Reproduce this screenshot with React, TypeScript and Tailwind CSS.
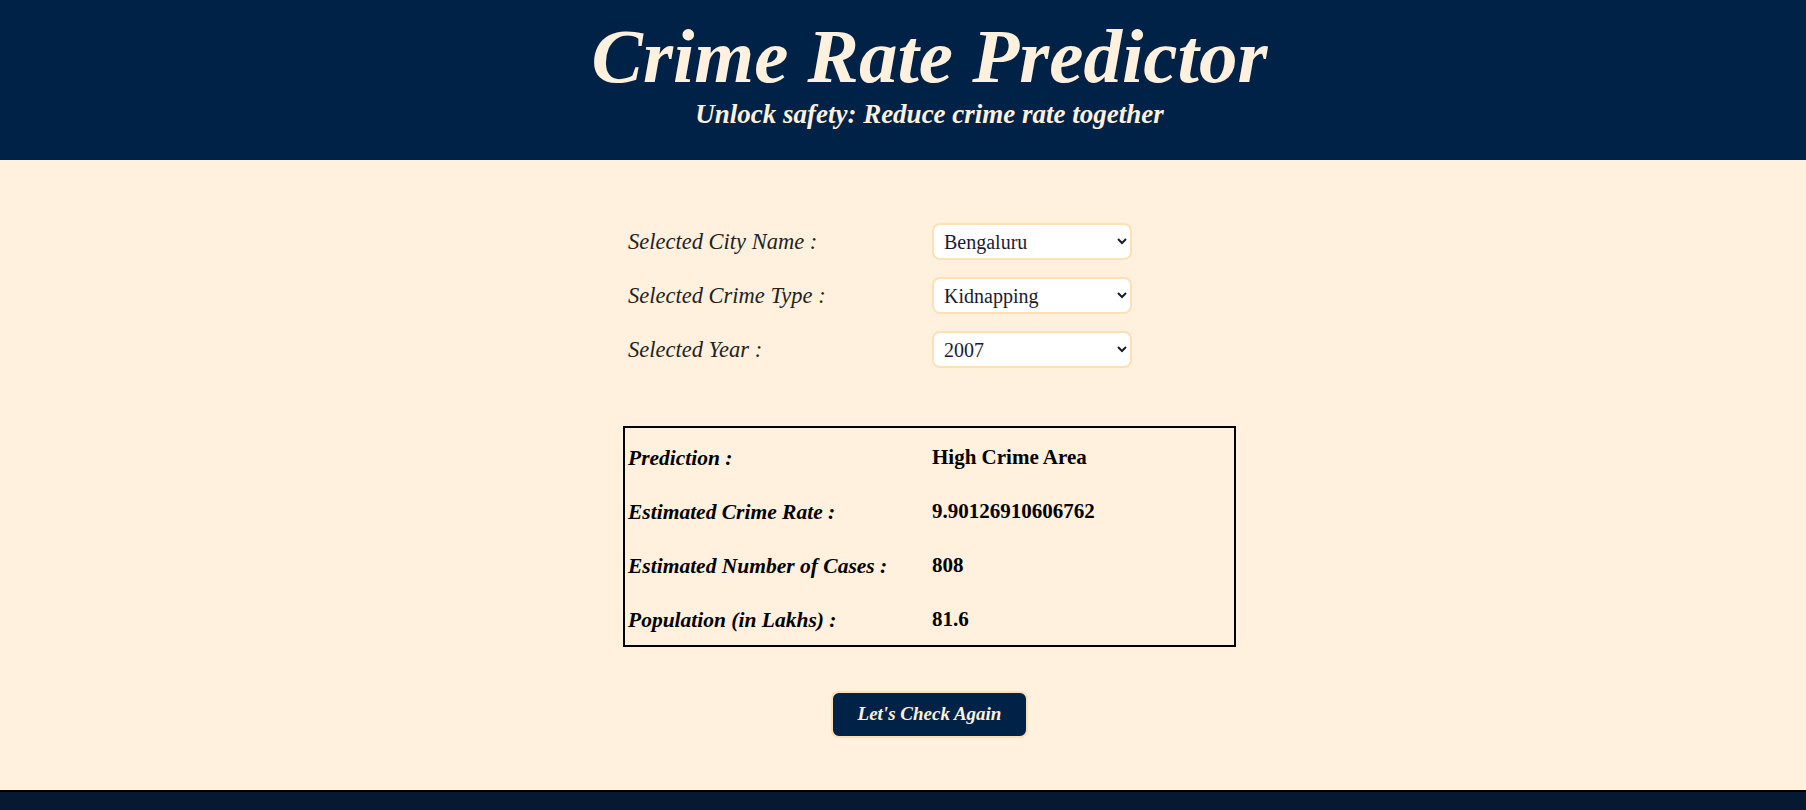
import React from 'react'

const serif = "font-['Liberation_Serif',serif]"

const results = [
  { label: 'Prediction :', value: 'High Crime Area' },
  { label: 'Estimated Crime Rate :', value: '9.90126910606762' },
  { label: 'Estimated Number of Cases :', value: '808' },
  { label: 'Population (in Lakhs) :', value: '81.6' },
]

const fields = [
  { label: 'Selected City Name :', value: 'Bengaluru' },
  { label: 'Selected Crime Type :', value: 'Kidnapping' },
  { label: 'Selected Year :', value: '2007' },
]

export default function App() {
  return (
    <div className={`h-[810px] flex flex-col bg-[#fff1dd] ${serif}`}>
      {/* Header */}
      <header className="h-[160px] flex-none bg-[#012247] flex flex-col items-center pl-[53px] text-[#fff1dd] italic">
        <h1 className="mt-[12px] text-[77px] leading-[88px] font-bold">Crime Rate Predictor</h1>
        <p className="text-[27px] leading-[30px] font-bold -mt-[1px]">Unlock safety: Reduce crime rate together</p>
      </header>

      <main className="flex-1 flex justify-center pl-[53px]">
        <div className="w-[613px] flex flex-col pt-[63px]">
          {/* Form */}
          <div className="flex flex-col gap-[17px] pl-[5px]">
            {fields.map((f) => (
              <div key={f.label} className="flex items-center h-[37px]">
                <span className="w-[304px] text-[22.5px] italic text-[#222]">{f.label}</span>
                <select
                  defaultValue={f.value}
                  className="w-[200px] h-[37px] bg-white border-2 border-[#fde0b5] rounded-lg pl-[6px] pr-1 text-[20px] text-[#1b1b2f] outline-none"
                >
                  <option value={f.value}>{f.value}</option>
                </select>
              </div>
            ))}
          </div>

          {/* Results */}
          <div className="mt-[58px] h-[221px] border-2 border-black pt-[3px]">
            {results.map((r) => (
              <div key={r.label} className="flex items-center h-[54px] pl-[3px]">
                <span className="w-[304px] text-[21.5px] font-bold italic text-black">{r.label}</span>
                <span className="text-[21px] font-bold text-black">{r.value}</span>
              </div>
            ))}
          </div>

          <div className="flex justify-center mt-[44px]">
            <button className="w-[197px] h-[47px] bg-[#012247] border-2 border-[#fde0b5] rounded-lg text-[#fff1dd] text-[19px] font-bold italic">
              Let's Check Again
            </button>
          </div>
        </div>
      </main>

      {/* Footer */}
      <footer className="h-[20px] flex-none bg-[#061832] border-t-2 border-black" />
    </div>
  )
}
